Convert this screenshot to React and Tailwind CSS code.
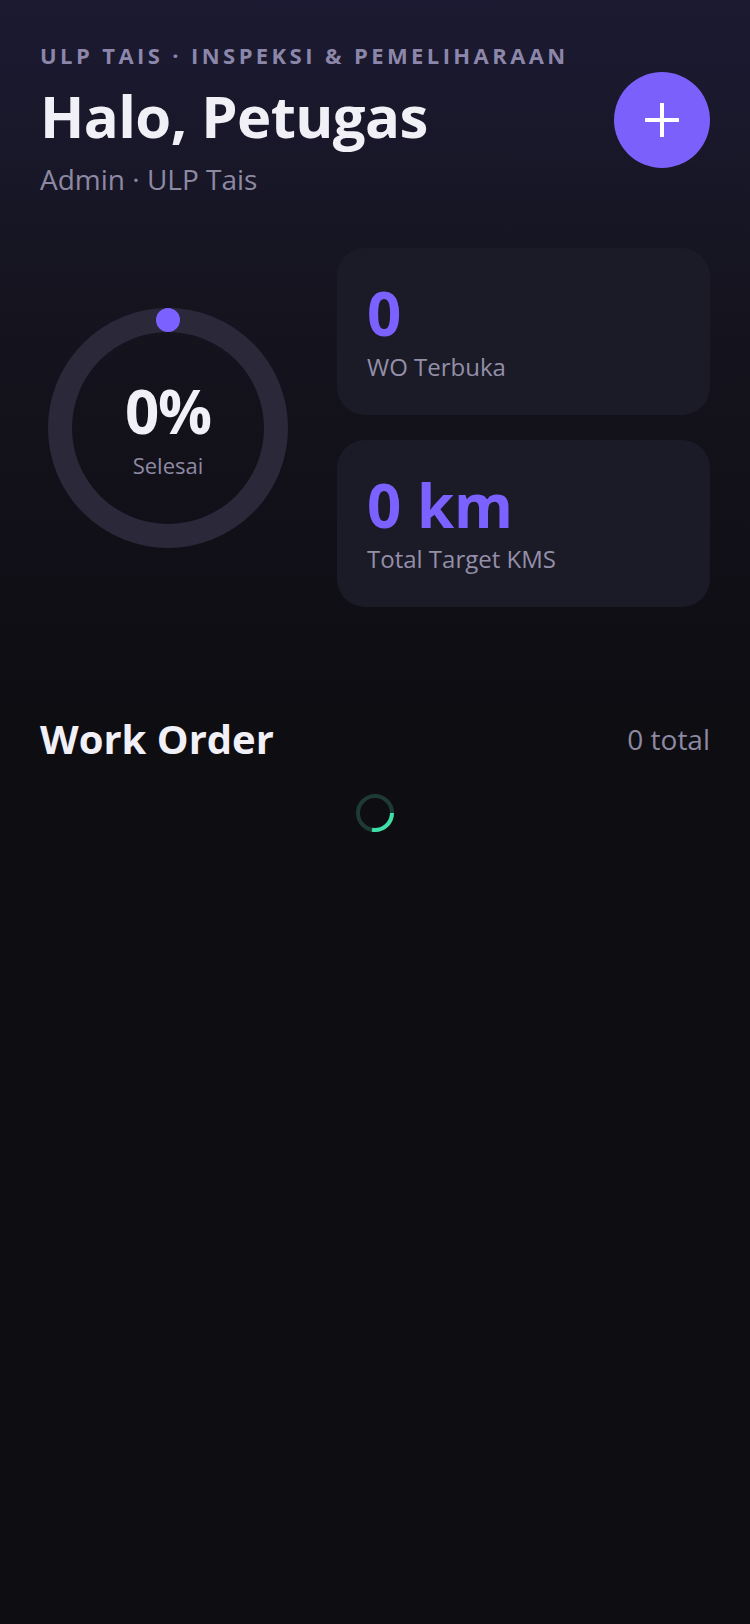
export default function App() {
  return (
    <div
      className="min-h-screen w-full bg-[linear-gradient(180deg,#1c1a32_0px,#15141f_300px,#0e0d12_720px,#0e0d12_100%)] px-10 pt-[40px] text-[#f1f0f7]"
      style={{ fontFamily: '"Open Sans", "Noto Sans", sans-serif' }}
    >
      {/* Header */}
      <div className="flex items-start justify-between">
        <div className="flex flex-col">
          <div className="text-[22px] font-bold leading-[30px] tracking-[0.155em] text-[#8c87aa]">
            ULP TAIS · INSPEKSI &amp; PEMELIHARAAN
          </div>
          <div className="mt-[11px] text-[58px] font-bold leading-[70px] tracking-[-0.01em] text-[#f1f0f7]">
            Halo, Petugas
          </div>
          <div className="mt-[10px] text-[28px] leading-[36px] text-[#8d89a3]">
            Admin · ULP Tais
          </div>
        </div>
        <button className="mt-[32px] flex h-[96px] w-[96px] items-center justify-center rounded-full bg-[#7c60fb]">
          <svg width="34" height="34" viewBox="0 0 34 34" fill="none">
            <path d="M17 1v32M1 17h32" stroke="#ffffff" strokeWidth="4" strokeLinecap="round" />
          </svg>
        </button>
      </div>

      {/* Stats */}
      <div className="mt-[51px] flex items-center gap-[49px]">
        <div className="relative ml-2 h-[240px] w-[240px] shrink-0">
          <svg width="240" height="240" viewBox="0 0 240 240" className="absolute inset-0">
            <circle cx="120" cy="120" r="108" stroke="#2a2839" strokeWidth="24" fill="none" />
            <circle cx="120" cy="12" r="12" fill="#7b61ff" />
          </svg>
          <div className="absolute inset-0 flex flex-col items-center justify-center pt-[4px]">
            <div className="text-[60px] font-bold leading-[60px] tracking-[-0.02em] text-[#f1f0f7]">0%</div>
            <div className="mt-[10px] text-[22px] leading-[28px] text-[#8f8aa4]">Selesai</div>
          </div>
        </div>
        <div className="flex flex-1 flex-col gap-[25px]">
          <div className="flex h-[167px] flex-col justify-center rounded-[28px] bg-[#1b1a27] px-[30px] pt-[2px]">
            <div className="text-[60px] font-bold leading-[58px] text-[#7b61ff]">0</div>
            <div className="mt-[10px] text-[24px] leading-[30px] text-[#948fa8]">WO Terbuka</div>
          </div>
          <div className="flex h-[167px] flex-col justify-center rounded-[28px] bg-[#1b1a27] px-[30px] pt-[2px]">
            <div className="text-[60px] font-bold leading-[58px] text-[#7b61ff]">0 km</div>
            <div className="mt-[10px] text-[24px] leading-[30px] text-[#948fa8]">Total Target KMS</div>
          </div>
        </div>
      </div>

      {/* Work Order */}
      <div className="mt-[106px] flex items-center justify-between">
        <div className="text-[40px] font-bold leading-[52px] text-[#f1f0f7]">Work Order</div>
        <div className="text-[28px] leading-[36px] text-[#8d89a3]">0 total</div>
      </div>

      <div className="mt-[28px] flex justify-center">
        <svg width="40" height="40" viewBox="0 0 40 40" fill="none">
          <circle cx="20" cy="20" r="17" stroke="#1d3a33" strokeWidth="4" />
          <path d="M37 20 A17 17 0 0 1 17.04 36.74" stroke="#3ee0a8" strokeWidth="4" />
        </svg>
      </div>
    </div>
  );
}
